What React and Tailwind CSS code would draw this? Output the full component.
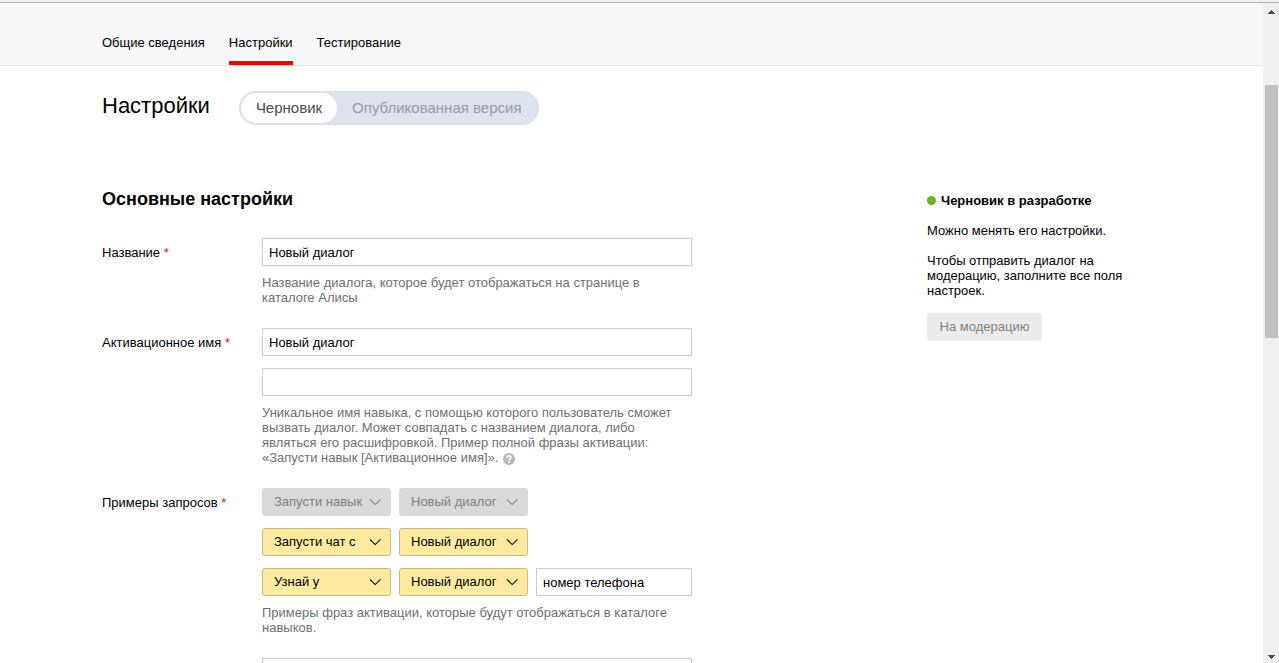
import { useState } from 'react'

const TABS = ['Общие сведения', 'Настройки', 'Тестирование']
const VERSIONS = ['Черновик', 'Опубликованная версия']

const EXAMPLES = [
  { phrase: 'Запусти навык', name: 'Новый диалог', disabled: true },
  { phrase: 'Запусти чат с', name: 'Новый диалог' },
  { phrase: 'Узнай у', name: 'Новый диалог', request: 'номер телефона' },
]

function TextInput({ className = 'w-full', ...props }) {
  return (
    <input
      type="text"
      className={`block h-7 border border-[#ccc] bg-white px-1.5 text-black outline-none focus:border-[#999] ${className}`}
      {...props}
    />
  )
}

function Select({ options, disabled, label }) {
  return (
    <div className="relative w-[129px]">
      <select
        aria-label={label}
        disabled={disabled}
        className={`block h-7 w-full appearance-none rounded-[3px] border pb-0.5 pl-[11px] pr-6 outline-none ${
          disabled ? 'border-[#d9d9d9] bg-[#d9d9d9] text-[#808080] opacity-100' : 'border-[#ccbb7f] bg-[#ffeba0] text-black'
        }`}
      >
        {options.map(o => <option key={o}>{o}</option>)}
      </select>
      <svg
        viewBox="0 0 12 8"
        className={`pointer-events-none absolute right-2.5 top-[10px] h-2 w-3 ${disabled ? 'text-[#808080]' : 'text-black'}`}
        fill="none"
        stroke="currentColor"
        strokeWidth="1.1"
      >
        <path d="M0.9 1.4 L6.2 6.6 L11.5 1.4" />
      </svg>
    </div>
  )
}

function Field({ label, htmlFor, hint, children }) {
  return (
    <div className="flex">
      <label htmlFor={htmlFor} className="w-40 shrink-0 pt-[7px]">
        {label} {label && <span className="text-[#f00]">*</span>}
      </label>
      <div className="w-[430px]">
        <div className="flex flex-col gap-3">{children}</div>
        {hint && <p className="mt-[9px] text-[#707070]">{hint}</p>}
      </div>
    </div>
  )
}

function Header() {
  return (
    <header className="border-b border-[#e5e5e5] bg-[#f5f7f9] px-[102px] pt-8">
      <nav className="flex gap-6">
        {TABS.map(tab => (
          <a
            key={tab}
            href="#"
            className={`border-b-4 pb-[11px] ${tab === 'Настройки' ? 'border-[#f00]' : 'border-transparent'}`}
          >
            {tab}
          </a>
        ))}
      </nav>
    </header>
  )
}

function VersionSwitch() {
  const [version, setVersion] = useState(VERSIONS[0])

  return (
    <div className="flex rounded-full border-2 border-[#d9e0ed] bg-[#dce2ee] text-[15px]">
      {VERSIONS.map(v => (
        <button
          key={v}
          type="button"
          aria-pressed={v === version}
          onClick={() => setVersion(v)}
          className={`h-[30px] rounded-full px-[15px] pb-0.5 ${v === version ? 'bg-white text-[#4c4c4c]' : 'text-[#999da6]'}`}
        >
          {v}
        </button>
      ))}
    </div>
  )
}

function Status() {
  return (
    <aside className="w-[234px] shrink-0 pr-8 pt-1">
      <h3 className="flex items-center gap-[5px] font-bold">
        <span className="size-[9px] rounded-full bg-[#70b120]" />
        Черновик в разработке
      </h3>
      <p className="mt-[15px]">Можно менять его настройки.</p>
      <p className="mt-[15px]">Чтобы отправить диалог на модерацию, заполните все поля настроек.</p>
      <button type="button" disabled className="mt-[15px] h-7 w-[115px] rounded-[3px] bg-[#ebebeb] pb-px text-[#808080]">
        На модерацию
      </button>
    </aside>
  )
}

function Scrollbar() {
  return (
    <div className="flex w-4 shrink-0 flex-col items-center bg-[#f0f0f0]" aria-hidden="true">
      <svg viewBox="0 0 7 4" className="mt-[7px] h-1 w-[7px]" fill="#505050" shapeRendering="crispEdges">
        <path d="M3 0h1v1h1v1h1v1h1v1H0V3h1V2h1V1h1z" />
      </svg>
      <div className="h-[71px]" />
      <div className="h-[253px] w-[13px] bg-[#c1c1c1]" />
      <svg viewBox="0 0 7 4" className="mb-1 mt-auto h-1 w-[7px]" fill="#505050" shapeRendering="crispEdges">
        <path d="M0 0h7v1H6v1H5v1H4v1H3V3H2V2H1V1H0z" />
      </svg>
    </div>
  )
}

export default function App() {
  return (
    <div className="flex h-screen flex-col overflow-hidden bg-white font-['Liberation_Sans',Arial,sans-serif] text-[13px] leading-[15px] text-black">
      <div className="h-[3px] shrink-0 border-b border-[#b6b4b6] bg-[#f2f2f2]" />
      <div className="flex min-h-0 flex-1">
        <div className="min-w-0 flex-1 overflow-hidden">
          <Header />
          <main className="px-[102px] pt-[25px]">
            <div className="flex items-start gap-[29px]">
              <h1 className="pt-[3px] text-[22px] leading-6">Настройки</h1>
              <VersionSwitch />
            </div>

            <div className="mt-16 flex items-start justify-between">
              <form>
                <h2 className="text-[18px] font-bold leading-5">Основные настройки</h2>
                <div className="mt-[29px] flex flex-col gap-[23px]">
                  <Field
                    label="Название"
                    htmlFor="title"
                    hint="Название диалога, которое будет отображаться на странице в каталоге Алисы"
                  >
                    <TextInput id="title" defaultValue="Новый диалог" />
                  </Field>

                  <Field
                    label="Активационное имя"
                    htmlFor="activation"
                    hint={
                      <>
                        Уникальное имя навыка, с помощью которого пользователь сможет вызвать диалог. Может совпадать с
                        названием диалога, либо являться его расшифровкой. Пример полной фразы активации: «Запусти навык
                        [Активационное имя]».{' '}
                        <svg viewBox="0 0 12 12" className="ml-px inline-block size-3 align-[-3px]">
                          <circle cx="6" cy="6" r="6" fill="#b8b8b8" />
                          <path
                            d="M4 4.8 C4 2.2 8 2.2 8 4.6 C8 5.9 6.1 5.8 6.1 7.4"
                            fill="none"
                            stroke="#fff"
                            strokeWidth="1.6"
                          />
                          <rect x="5.2" y="8.2" width="1.7" height="1.6" fill="#fff" />
                        </svg>
                      </>
                    }
                  >
                    <TextInput id="activation" defaultValue="Новый диалог" />
                    <TextInput aria-label="Дополнительное активационное имя" />
                  </Field>

                  <Field
                    label="Примеры запросов"
                    htmlFor="request"
                    hint="Примеры фраз активации, которые будут отображаться в каталоге навыков."
                  >
                    {EXAMPLES.map(ex => (
                      <div key={ex.phrase} className="flex gap-2">
                        <Select label="Фраза" options={[ex.phrase]} disabled={ex.disabled} />
                        <Select label="Имя" options={[ex.name]} disabled={ex.disabled} />
                        {ex.request && <TextInput id="request" defaultValue={ex.request} className="min-w-0 flex-1" />}
                      </div>
                    ))}
                  </Field>

                  <Field>
                    <TextInput aria-label="Описание" />
                  </Field>
                </div>
              </form>
              <Status />
            </div>
          </main>
        </div>
        <Scrollbar />
      </div>
    </div>
  )
}
